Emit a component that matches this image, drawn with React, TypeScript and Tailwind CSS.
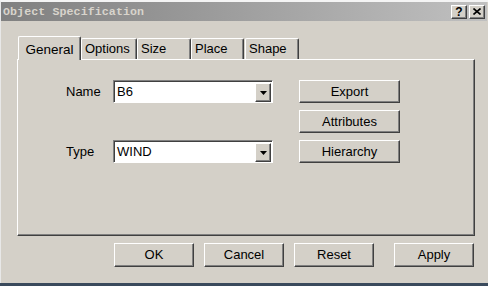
const raised =
  "border border-t-white border-l-white border-r-[#404040] border-b-[#404040] shadow-[inset_-1px_-1px_0_#808080]";

function Combo({ value }: { value: string }) {
  return (
    <div className="flex h-[23px] w-[160px] bg-white border border-t-[#808080] border-l-[#808080] border-r-white border-b-white shadow-[inset_1px_1px_0_#404040] pl-[2px] pt-[1px] pr-[1px] pb-[1px]">
      <div className="flex-1 flex items-center pl-[1px] leading-none">{value}</div>
      <div className={`w-[16px] h-[19px] mt-[1px] bg-[#d4d0c8] flex items-center justify-center ${raised}`}>
        <svg width="7" height="4" viewBox="0 0 7 4">
          <path d="M0 0h7L3.5 4z" fill="#000" />
        </svg>
      </div>
    </div>
  );
}

function Button({ label, className = "" }: { label: string; className?: string }) {
  return (
    <div className={`flex items-center justify-center bg-[#d4d0c8] ${raised} ${className}`}>
      {label}
    </div>
  );
}

const tabs = [
  { label: "Options", w: "w-[56px]" },
  { label: "Size", w: "w-[54px]" },
  { label: "Place", w: "w-[53px]" },
  { label: "Shape", w: "w-[54px] ml-[1px]" },
];

export default function App() {
  return (
    <div className="w-[488px] h-[286px] bg-[#3a4a5c] overflow-hidden font-['Liberation_Sans',Arial,sans-serif] text-[13px] text-black">
      <div className="h-[283px] bg-[#d4d0c8] border-t-2 border-t-[#f4f4f4] border-l border-l-[#e8e8e8] flex flex-col">
        {/* title bar */}
        <div className="h-[19px] mr-[1px] flex items-center bg-gradient-to-r from-[#808080] to-[#c0c0c0] pl-[2px] pr-[2px]">
          <span className="flex-1 font-['Liberation_Mono',monospace] font-bold text-[11.6px] text-[#d8d4cc] tracking-[0.1px]">
            Object Specification
          </span>
          <div className={`w-[16px] h-[14px] bg-[#d4d0c8] flex items-center justify-center font-bold text-[12px] leading-none ${raised}`}>
            ?
          </div>
          <div className={`w-[16px] h-[14px] ml-[2px] bg-[#d4d0c8] flex items-center justify-center ${raised}`}>
            <svg width="8" height="7" viewBox="0 0 8 7">
              <path d="M0.5 0.5L7.5 6.5M7.5 0.5L0.5 6.5" stroke="#000" strokeWidth="1.6" />
            </svg>
          </div>
        </div>

        {/* tabs */}
        <div className="mt-[15px] ml-[16px] flex items-end h-[23px]">
          <div className="relative z-10 -mb-[1px] ml-[1px] w-[63px] h-[24px] bg-[#d4d0c8] border-t border-l border-t-white border-l-white border-r border-r-[#404040] shadow-[inset_-1px_0_0_#808080] rounded-t-[2px] flex items-start justify-center pt-[3px] text-[13.5px]">
            General
          </div>
          {tabs.map((t) => (
            <div
              key={t.label}
              className={`${t.w} h-[21px] border-t border-l border-t-white border-l-white border-r border-r-[#404040] shadow-[inset_-1px_0_0_#808080] rounded-t-[2px] flex items-center pl-[3px]`}
            >
              {t.label}
            </div>
          ))}
        </div>

        {/* panel */}
        <div className="ml-[16px] w-[458px] h-[177px] border border-t-white border-l-white border-r-[#404040] border-b-[#404040] shadow-[inset_-1px_-1px_0_#808080] pt-[20px] pl-[48px]">
          <div className="grid grid-cols-[47px_160px_100px] grid-rows-[23px_23px_23px] gap-y-[7px] gap-x-0">
            <div className="flex items-center">Name</div>
            <Combo value="B6" />
            <Button label="Export" className="ml-[26px] w-[101px] h-[23px]" />
            <div />
            <div />
            <Button label="Attributes" className="ml-[26px] w-[101px] h-[23px]" />
            <div className="flex items-center">Type</div>
            <Combo value="WIND" />
            <Button label="Hierarchy" className="ml-[26px] w-[101px] h-[23px]" />
          </div>
        </div>

        {/* bottom buttons */}
        <div className="mt-[7px] ml-[113px] flex">
          <Button label="OK" className="w-[80px] h-[24px]" />
          <Button label="Cancel" className="ml-[10px] w-[80px] h-[24px]" />
          <Button label="Reset" className="ml-[10px] w-[80px] h-[24px]" />
          <Button label="Apply" className="ml-[20px] w-[80px] h-[24px]" />
        </div>
      </div>
    </div>
  );
}
